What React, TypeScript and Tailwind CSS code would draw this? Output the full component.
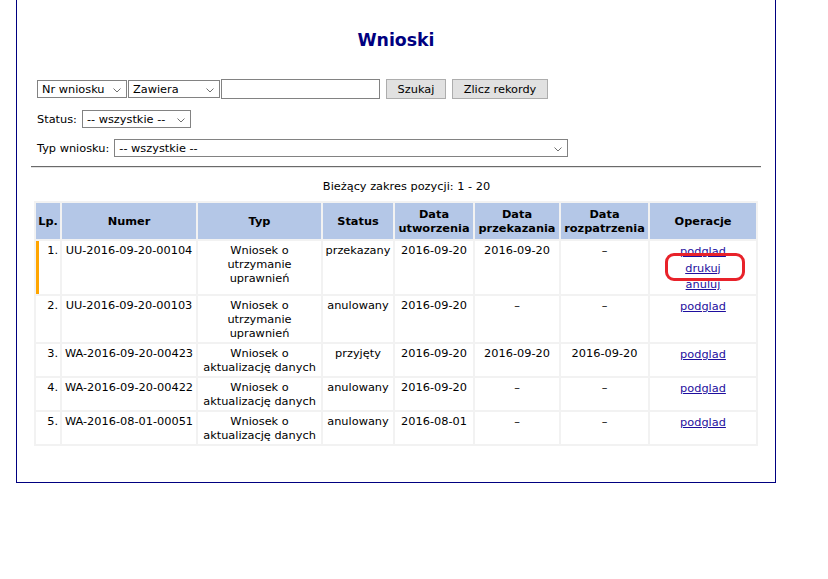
import React from "react";

interface Wniosek {
  lp: string;
  numer: string;
  typ: string[];
  status: string;
  utworzenia: string;
  przekazania: string;
  rozpatrzenia: string;
  operacje: string[];
  active?: boolean;
}

const rows: Wniosek[] = [
  {
    lp: "1.",
    numer: "UU-2016-09-20-00104",
    typ: ["Wniosek o", "utrzymanie", "uprawnień"],
    status: "przekazany",
    utworzenia: "2016-09-20",
    przekazania: "2016-09-20",
    rozpatrzenia: "–",
    operacje: ["podglad", "drukuj", "anuluj"],
    active: true,
  },
  {
    lp: "2.",
    numer: "UU-2016-09-20-00103",
    typ: ["Wniosek o", "utrzymanie", "uprawnień"],
    status: "anulowany",
    utworzenia: "2016-09-20",
    przekazania: "–",
    rozpatrzenia: "–",
    operacje: ["podglad"],
  },
  {
    lp: "3.",
    numer: "WA-2016-09-20-00423",
    typ: ["Wniosek o", "aktualizację danych"],
    status: "przyjęty",
    utworzenia: "2016-09-20",
    przekazania: "2016-09-20",
    rozpatrzenia: "2016-09-20",
    operacje: ["podglad"],
  },
  {
    lp: "4.",
    numer: "WA-2016-09-20-00422",
    typ: ["Wniosek o", "aktualizację danych"],
    status: "anulowany",
    utworzenia: "2016-09-20",
    przekazania: "–",
    rozpatrzenia: "–",
    operacje: ["podglad"],
  },
  {
    lp: "5.",
    numer: "WA-2016-08-01-00051",
    typ: ["Wniosek o", "aktualizację danych"],
    status: "anulowany",
    utworzenia: "2016-08-01",
    przekazania: "–",
    rozpatrzenia: "–",
    operacje: ["podglad"],
  },
];

function Chevron() {
  return (
    <svg width="8" height="5" viewBox="0 0 8 5" className="shrink-0 mt-[2px]">
      <polyline points="0.5,0.5 4,4 7.5,0.5" fill="none" stroke="#707070" strokeWidth="1" />
    </svg>
  );
}

function FakeSelect({ label, width }: { label: string; width: string }) {
  return (
    <div
      className={`${width} h-[18px] flex items-center justify-between border border-[#828282] bg-white pl-[4px] pr-[5px] leading-[14px]`}
    >
      <span className="whitespace-nowrap">{label}</span>
      <Chevron />
    </div>
  );
}

export default function App() {
  const td = "bg-white px-[2px] py-[2px] align-top text-center leading-[14px]";
  const th = "bg-[#b4c7e7] px-[2px] py-[4px] align-middle text-center font-bold leading-[14px]";

  return (
    <div className="w-[828px] h-[579px] bg-white text-black font-['DejaVu_Sans','Verdana',sans-serif] text-[11.33px]">
      <div className="ml-[16px] w-[760px] h-[483px] border-x border-b border-[#000080] px-[14px]">
        {/* Title */}
        <h1 className="pt-[30px] leading-[20px] text-center text-[17.33px] font-bold text-[#000080]">
          Wnioski
        </h1>

        {/* Search form */}
        <div className="ml-[6px] mt-[29px]">
          <div className="flex items-center h-[20px]">
            <FakeSelect label="Nr wniosku" width="w-[90px]" />
            <div className="ml-[1px]">
              <FakeSelect label="Zawiera" width="w-[92px]" />
            </div>
            <div className="ml-[1px] w-[159px] h-[20px] border border-[#828282] bg-white" />
            <button className="ml-[6px] w-[60px] h-[20px] border border-[#adadad] bg-[#e1e1e1] leading-[14px]">
              Szukaj
            </button>
            <button className="ml-[6px] w-[96px] h-[20px] border border-[#adadad] bg-[#e1e1e1] leading-[14px]">
              Zlicz rekordy
            </button>
          </div>

          <div className="flex items-center gap-[5px] mt-[11px] h-[18px]">
            <span className="leading-[14px]">Status:</span>
            <FakeSelect label="-- wszystkie --" width="w-[109px]" />
          </div>

          <div className="flex items-center gap-[5px] mt-[11px] h-[18px]">
            <span className="leading-[14px]">Typ wniosku:</span>
            <FakeSelect label="-- wszystkie --" width="w-[454px]" />
          </div>
        </div>

        {/* Separator */}
        <div className="mt-[9px] h-[2px] border-t border-[#6a6a6a] bg-[#e2e2e2]" />

        <p className="mt-[11px] pl-[21px] text-center leading-[14px]">
          Bieżący zakres pozycji: 1 - 20
        </p>

        {/* Results */}
        <table className="mt-[8px] ml-[3px] w-[724px] table-fixed border-separate border-spacing-[2px] bg-[#f2f2f2]">
          <thead>
            <tr>
              <th className={`${th} w-[24px]`}>Lp.</th>
              <th className={`${th} w-[134px]`}>Numer</th>
              <th className={`${th} w-[123px]`}>Typ</th>
              <th className={`${th} w-[70px]`}>Status</th>
              <th className={`${th} w-[78px]`}>
                Data
                <br />
                utworzenia
              </th>
              <th className={`${th} w-[84px]`}>
                Data
                <br />
                przekazania
              </th>
              <th className={`${th} w-[87px]`}>
                Data
                <br />
                rozpatrzenia
              </th>
              <th className={`${th} w-[106px]`}>Operacje</th>
            </tr>
          </thead>
          <tbody>
            {rows.map((r) => {
              const bg = r.active ? "bg-[#fcfce5]" : "";
              return (
                <tr key={r.numer}>
                  <td
                    className={`${td} ${bg} text-right! pr-[2px] ${
                      r.active ? "border-l-[3px] border-[#ffa500]" : ""
                    }`}
                  >
                    {r.lp}
                  </td>
                  <td className={`${td} ${bg} whitespace-nowrap`}>{r.numer}</td>
                  <td className={`${td} ${bg}`}>
                    {r.typ.map((t) => (
                      <div key={t} className="whitespace-nowrap">
                        {t}
                      </div>
                    ))}
                  </td>
                  <td className={`${td} ${bg}`}>{r.status}</td>
                  <td className={`${td} ${bg}`}>{r.utworzenia}</td>
                  <td className={`${td} ${bg}`}>{r.przekazania}</td>
                  <td className={`${td} ${bg}`}>{r.rozpatrzenia}</td>
                  <td className={`${td} ${bg} relative pb-[1px]`}>
                    {r.operacje.map((op) => (
                      <div key={op} className="leading-[16.6px]">
                        <a href="#" className="text-[#1e0e9e] underline">
                          {op}
                        </a>
                      </div>
                    ))}
                    {r.active && (
                      <div className="absolute left-[15px] top-[12px] w-[80px] h-[28px] rounded-[9px] border-[3px] border-[#e8222a] pointer-events-none" />
                    )}
                  </td>
                </tr>
              );
            })}
          </tbody>
        </table>
      </div>
    </div>
  );
}
